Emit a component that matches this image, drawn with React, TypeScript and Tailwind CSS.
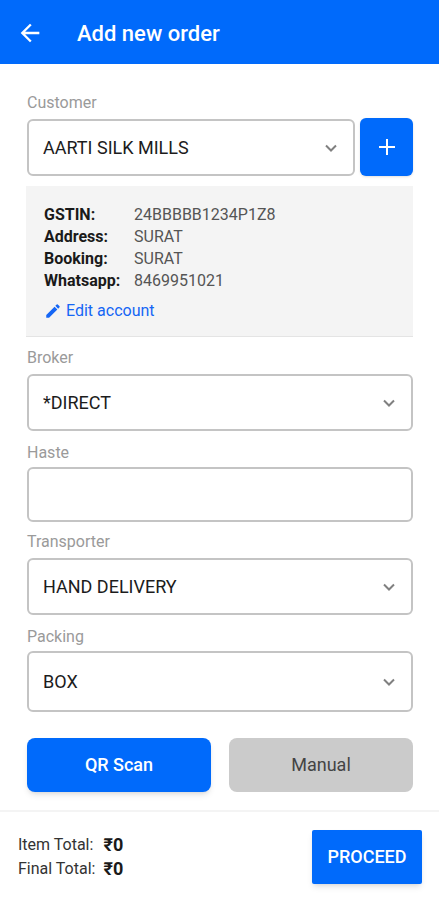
import { useState, type ReactNode } from 'react';
import { MdArrowBack, MdEdit } from 'react-icons/md';

const ACCOUNT_DETAILS = [
    { label: 'GSTIN:', value: '24BBBBB1234P1Z8' },
    { label: 'Address:', value: 'SURAT' },
    { label: 'Booking:', value: 'SURAT' },
    { label: 'Whatsapp:', value: '8469951021' },
];

const TOTALS = [
    { label: 'Item Total:', value: '₹0' },
    { label: 'Final Total:', value: '₹0' },
];

interface FieldProps {
    id: string;
    label: string;
    className?: string;
    children: ReactNode;
}

function Field({ id, label, className = '', children }: FieldProps) {
    return (
        <div className={`flex flex-col ${className}`}>
            <label htmlFor={id} className="text-base leading-5 text-[#9a9a9a]">
                {label}
            </label>
            {children}
        </div>
    );
}

interface SelectBoxProps {
    id: string;
    options: string[];
    className?: string;
}

function SelectBox({ id, options, className = 'h-[57px]' }: SelectBoxProps) {
    return (
        <div className="relative min-w-0 flex-1">
            <select
                id={id}
                className={`block w-full appearance-none rounded-md border-2 border-[#c4c4c4] bg-white pl-3.5 pr-12 text-lg text-[#1c1c1c] ${className}`}
            >
                {options.map((option) => (
                    <option key={option}>{option}</option>
                ))}
            </select>
            <svg
                className="pointer-events-none absolute inset-y-0 right-[18px] my-auto h-3 w-3"
                viewBox="0 0 12 12"
                fill="none"
                stroke="#808080"
                strokeWidth={2}
            >
                <path d="M1 3.5l5 5 5-5" />
            </svg>
        </div>
    );
}

export default function App() {
    const [haste, setHaste] = useState('');

    return (
        <div className="flex min-h-screen flex-col bg-white font-['Roboto',sans-serif]">
            {/* Header */}
            <header className="flex h-16 items-center gap-[33px] bg-[#006afb] px-4 pt-0.5 text-white">
                <button type="button" aria-label="Back">
                    <MdArrowBack className="h-7 w-7" />
                </button>
                <h1 className="text-[22px] font-medium">Add new order</h1>
            </header>

            <main className="flex flex-1 flex-col px-[26px] pt-[29px] pb-[18px]">
                <Field id="customer" label="Customer" className="pl-px gap-1.5">
                    <div className="flex items-end gap-[5px]">
                        <SelectBox id="customer" options={['AARTI SILK MILLS']} />
                        <button
                            type="button"
                            aria-label="Add customer"
                            className="-mt-0.5 flex h-[58px] w-[53px] items-center justify-center rounded-md bg-[#006afb] text-white shadow-sm"
                        >
                            <svg className="h-4 w-4" viewBox="0 0 16 16" stroke="currentColor" strokeWidth={2}>
                                <path d="M8 0v16M0 8h16" />
                            </svg>
                        </button>
                    </div>
                </Field>

                {/* Selected account */}
                <section className="mt-2.5 border-b border-[#e4e4e4] bg-[#f4f4f4] px-[18px] pt-[18px] pb-3.5">
                    <dl className="grid grid-cols-[90px_1fr] text-base leading-[22px]">
                        {ACCOUNT_DETAILS.map(({ label, value }) => (
                            <div key={label} className="contents">
                                <dt className="font-bold text-[#1a1a1a]">{label}</dt>
                                <dd className="text-[#555555]">{value}</dd>
                            </div>
                        ))}
                    </dl>
                    <a href="#edit" className="mt-2 flex items-center gap-1 text-base leading-[22px] text-[#1566f5]">
                        <MdEdit className="h-[18px] w-[18px]" />
                        Edit account
                    </a>
                </section>

                <Field id="broker" label="Broker" className="mt-[11px] pl-px gap-1.5">
                    <SelectBox id="broker" options={['*DIRECT']} />
                </Field>

                <Field id="haste" label="Haste" className="mt-3 pl-px gap-1">
                    <input
                        id="haste"
                        type="text"
                        value={haste}
                        onChange={(e) => setHaste(e.target.value)}
                        className="h-[55px] w-full rounded-md border-2 border-[#c4c4c4] bg-white px-3.5 text-lg text-[#1c1c1c]"
                    />
                </Field>

                <Field id="transporter" label="Transporter" className="mt-2.5 pl-px gap-1.5">
                    <SelectBox id="transporter" options={['HAND DELIVERY']} />
                </Field>

                <Field id="packing" label="Packing" className="mt-3 pl-px gap-1">
                    <SelectBox id="packing" options={['BOX']} className="h-[61px]" />
                </Field>

                <div className="mt-[26px] grid grid-cols-2 gap-[18px] pl-px">
                    <button
                        type="button"
                        className="h-[54px] rounded-lg bg-[#006afb] text-lg font-medium text-white shadow-md"
                    >
                        QR Scan
                    </button>
                    <button type="button" className="h-[54px] rounded-lg bg-[#cbcbcb] text-lg text-[#444444]">
                        Manual
                    </button>
                </div>
            </main>

            {/* Totals */}
            <footer className="flex items-center justify-between border-t-2 border-[#f4f4f4] pt-[18px] pr-[17px] pb-4 pl-[18px]">
                <dl className="grid grid-cols-[auto_auto] gap-x-2 text-base leading-6">
                    {TOTALS.map(({ label, value }) => (
                        <div key={label} className="contents">
                            <dt className="text-[#333333]">{label}</dt>
                            <dd className="text-lg leading-6 font-bold text-[#1a1a1a]">{value}</dd>
                        </div>
                    ))}
                </dl>
                <button
                    type="button"
                    className="h-[54px] w-[110px] rounded-xs bg-[#006afb] text-lg font-medium text-white shadow-md"
                >
                    PROCEED
                </button>
            </footer>
        </div>
    );
}
